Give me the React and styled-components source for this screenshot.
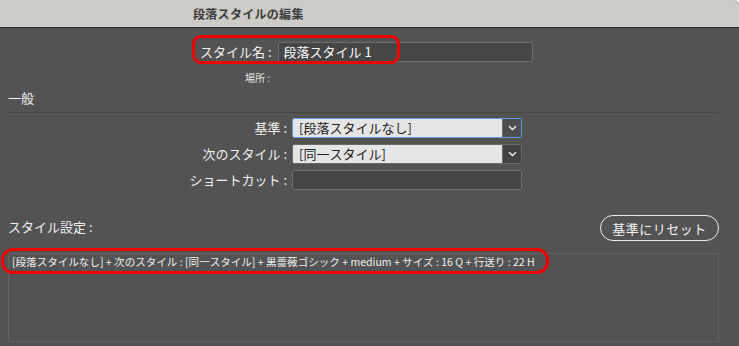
import React from 'react'
import styled, { createGlobalStyle } from 'styled-components'

const Global = createGlobalStyle`
  html, body {
    margin: 0;
    padding: 0;
    background: #fff;
  }
  body {
    font-family: "Noto Sans CJK JP", "Noto Sans", sans-serif;
  }
`

const Dialog = styled.div`
  width: 739px;
  height: 346px;
  background: #535353;
  border-top-right-radius: 5px;
  overflow: hidden;
  display: flex;
  flex-direction: column;
`

const TitleBar = styled.div`
  height: 27px;
  background: #cdcbc8;
  border-bottom: 1px solid #2c2c2c;
  display: flex;
  align-items: center;
  padding-left: 193px;
  font-size: 12px;
  font-weight: 700;
  color: #3c3c3c;
  letter-spacing: 0.3px;
`

const Body = styled.div`
  padding: 0 20px 0 8px;
  display: flex;
  flex-direction: column;
  color: #f2f2f2;
`

const NameRow = styled.div`
  margin-top: 14px;
  padding-left: 192px;
  display: flex;
  align-items: center;
  gap: 6px;
  position: relative;
`

const Label = styled.label`
  font-size: 13px;
  line-height: 20px;
  color: #f0f0f0;
  white-space: nowrap;
`

const NameInput = styled.div`
  width: 248px;
  height: 18px;
  background: #464646;
  border: 1px solid #6c6c6c;
  border-radius: 2px;
  font-size: 13px;
  line-height: 18px;
  padding-left: 5px;
  color: #fafafa;
`

const Mark = styled.div`
  position: absolute;
  left: ${p => p.$left}px;
  top: ${p => p.$top}px;
  width: ${p => p.$width}px;
  height: ${p => p.$height}px;
  border: 3px solid #f20000;
  border-radius: ${p => p.$radius}px;
  box-sizing: border-box;
  pointer-events: none;
`

const Location = styled.div`
  margin-top: 9px;
  padding-left: 237px;
  font-size: 10px;
  line-height: 13px;
  color: #e8e8e8;
`

const Section = styled.div`
  margin-top: 6px;
  font-size: 13px;
  line-height: 16px;
  color: #f2f2f2;
`

const Divider = styled.div`
  margin-top: 6px;
  height: 1px;
  background: #484848;
`

const Form = styled.div`
  margin-top: 5px;
  display: grid;
  grid-template-columns: 279px 230px;
  column-gap: 5px;
  row-gap: 6px;
  align-items: center;
`

const FormLabel = styled(Label)`
  text-align: right;
`

const Select = styled.div`
  height: 20px;
  box-sizing: border-box;
  display: flex;
  border: 1px solid ${p => (p.$focus ? '#5a9be0' : '#6a6a6a')};
  border-radius: 2px;
  overflow: hidden;
`

const SelectValue = styled.div`
  flex: 1;
  background: #e5e5e5;
  color: #1e1e1e;
  font-size: 13px;
  line-height: 18px;
  padding-left: 6px;
`

const SelectButton = styled.div`
  width: 18px;
  background: ${p => (p.$focus ? '#4e4e4e' : '#434343')};
  border-left: 1px solid #6a6a6a;
  display: flex;
  align-items: center;
  justify-content: center;
`

const TextInput = styled.div`
  height: 20px;
  box-sizing: border-box;
  background: #454545;
  border: 1px solid #6c6c6c;
  border-radius: 2px;
`

const SettingsHead = styled.div`
  margin-top: 25px;
  display: flex;
  align-items: center;
  justify-content: space-between;
`

const HeadLabel = styled(Label)`
  margin-top: -3px;
`

const ResetButton = styled.button`
  width: 119px;
  height: 26px;
  border: 1.5px solid #ececec;
  border-radius: 13px;
  background: transparent;
  color: #f4f4f4;
  font-family: inherit;
  font-size: 13px;
  letter-spacing: 0.5px;
  padding: 0;
`

const SummaryBox = styled.div`
  margin-top: 12px;
  height: 89px;
  box-sizing: border-box;
  border: 1px solid #636363;
  position: relative;
  padding: 0 3px;
  font-size: 10.55px;
  line-height: 16px;
  color: #f0f0f0;
  white-space: nowrap;
`

const Chevron = () => (
  <svg width="9" height="6" viewBox="0 0 9 6">
    <path d="M1 1.2 L4.5 4.5 L8 1.2" fill="none" stroke="#f2f2f2" strokeWidth="1.4" />
  </svg>
)

const App = () => {
  return (
    <Dialog>
      <Global />
      <TitleBar>段落スタイルの編集</TitleBar>
      <Body>
        <NameRow>
          <Label>スタイル名 :</Label>
          <NameInput>段落スタイル 1</NameInput>
          <Mark $left={184} $top={-7} $width={208} $height={29} $radius={9} />
        </NameRow>
        <Location>場所 :</Location>
        <Section>一般</Section>
        <Divider />
        <Form>
          <FormLabel>基準 :</FormLabel>
          <Select $focus>
            <SelectValue>[段落スタイルなし]</SelectValue>
            <SelectButton $focus><Chevron /></SelectButton>
          </Select>
          <FormLabel>次のスタイル :</FormLabel>
          <Select>
            <SelectValue>[同一スタイル]</SelectValue>
            <SelectButton><Chevron /></SelectButton>
          </Select>
          <FormLabel>ショートカット :</FormLabel>
          <TextInput />
        </Form>
        <SettingsHead>
          <HeadLabel>スタイル設定 :</HeadLabel>
          <ResetButton>基準にリセット</ResetButton>
        </SettingsHead>
        <SummaryBox>
          [段落スタイルなし] + 次のスタイル : [同一スタイル] + 黒薔薇ゴシック + medium + サイズ : 16 Q + 行送り : 22 H
          <Mark $left={-8} $top={-6} $width={548} $height={26} $radius={12} />
        </SummaryBox>
      </Body>
    </Dialog>
  )
}

export default App
